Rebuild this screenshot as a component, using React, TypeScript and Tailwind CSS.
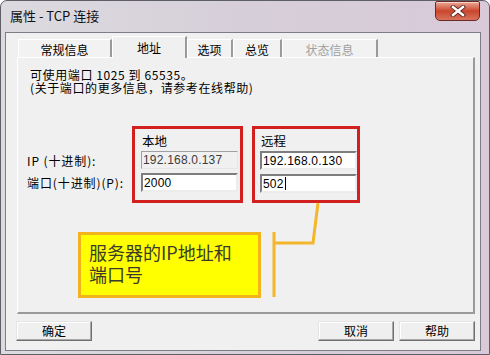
import React from 'react';

/**
 * Windows 7 style property dialog ("属性 - TCP 连接") with the address tab
 * open and a yellow annotation pointing at the remote IP / port fields.
 */

const cjk = "font-['Noto_Sans_CJK_SC',sans-serif]";
const latin = "font-['Liberation_Sans','Noto_Sans_CJK_SC',sans-serif]";

type Tab = { label: string; width: string; active?: boolean; disabled?: boolean };

const tabs: Tab[] = [
  { label: '常规信息', width: 'w-[94px]' },
  { label: '地址', width: 'w-[75px]', active: true },
  { label: '选项', width: 'w-[46px]' },
  { label: '总览', width: 'w-[49px]' },
  { label: '状态信息', width: 'w-[96px]', disabled: true },
];

function CloseButton() {
  return (
    <div className="self-start w-[45px] h-[20px] rounded-b-[5px] rounded-t-[2px] border border-[#6b2a22] bg-linear-to-b from-[#eba898] via-[#c9452c] to-[#d8725c] flex items-center justify-center shadow-[inset_0_1px_0_rgba(255,255,255,0.5)]">
      <svg width="16" height="12" viewBox="0 0 16 12">
        <path d="M3 2 L13 10 M13 2 L3 10" stroke="#5a2a24" strokeWidth="4.2" strokeLinecap="square" />
        <path d="M3 2 L13 10 M13 2 L3 10" stroke="#ffffff" strokeWidth="2.4" strokeLinecap="square" />
      </svg>
    </div>
  );
}

function TabStrip() {
  return (
    <div className="flex items-end h-[21px] pl-[1px]">
      {tabs.map((t) =>
        t.active ? (
          <div
            key={t.label}
            className={`${t.width} h-[22px] -mb-[1px] relative z-10 bg-[#f0f0f0] border-t border-l border-white border-r-2 border-r-[#9a9a9a] flex justify-center pt-[2px] text-[12px] leading-[17px] text-black ${cjk}`}
          >
            {t.label}
          </div>
        ) : (
          <div
            key={t.label}
            className={`${t.width} h-[18px] bg-[#f2f2f2] border-t border-l border-white border-r-2 border-r-[#9a9a9a] flex justify-center pt-[2px] text-[12px] leading-[16px] ${
              t.disabled ? 'text-[#a0a0a0]' : 'text-black'
            } ${cjk}`}
          >
            {t.label}
          </div>
        )
      )}
    </div>
  );
}

function Field({ value, readOnly, caret, width }: { value: string; readOnly?: boolean; caret?: boolean; width: string }) {
  return (
    <div
      className={`${width} flex items-center pl-[1px] text-[12px] leading-[14px] ${latin} ${
        readOnly
          ? 'h-[18px] bg-[#f0f0f0] border border-t-[#a0a0a0] border-l-[#a0a0a0] border-b-[#e6e6e6] border-r-[#e6e6e6] text-[#3c3c3c]'
          : 'h-[19px] bg-white border-2 border-t-[#7e7e7e] border-l-[#7e7e7e] border-b-[#ececec] border-r-[#ececec] text-black'
      }`}
    >
      <span className="tracking-[0.2px]">{value}</span>
      {caret && <span className="ml-[1px] w-[1px] h-[13px] bg-black" />}
    </div>
  );
}

function AddressBox({ title, ip, port, readOnlyIp, caret, width, fieldWidth, padLeft }: {
  title: string;
  ip: string;
  port: string;
  readOnlyIp?: boolean;
  caret?: boolean;
  width: string;
  fieldWidth: string;
  padLeft: string;
}) {
  return (
    <div className={`${width} h-[77px] border-[3px] border-[#d2201f] ${padLeft} pt-[2px] flex flex-col`}>
      <div className={`h-[20px] pl-[1px] text-[12.5px] leading-[20px] text-black ${cjk}`}>{title}</div>
      <Field value={ip} readOnly={readOnlyIp} width={fieldWidth} />
      <div className="h-[4px]" />
      <Field value={port} caret={caret} width={fieldWidth} />
    </div>
  );
}

function DialogButton({ label }: { label: string }) {
  return (
    <div
      className={`w-[76px] h-[20px] flex items-center justify-center bg-[#efefef] border border-t-[#e4e4e4] border-l-[#e4e4e4] border-b-[#707070] border-r-[#707070] shadow-[inset_-1px_-1px_0_#a8a8a8,inset_1px_1px_0_#ffffff] text-[12px] text-black ${cjk}`}
    >
      {label}
    </div>
  );
}

export default function App() {
  return (
    <div className="w-[490px] h-[355px] overflow-hidden flex flex-col border border-[#5e5e66] rounded-t-[7px] bg-linear-to-r from-[#dcdadf] via-[#d6cfd9] to-[#d9c9d9]">
      {/* Title bar */}
      <div className="h-[31px] flex justify-between pl-[9px] pr-[9px]">
        <div className={`pt-[6px] text-[13px] leading-[18px] text-[#111] ${cjk}`}>属性 - TCP 连接</div>
        <CloseButton />
      </div>

      {/* Client area */}
      <div className="ml-[4px] mr-[8px] h-[319px] border border-[#7d7d85] bg-[#f0f0f0] pl-[11px] pr-[5px] pt-[3px] flex flex-col">
        <TabStrip />

        {/* Tab panel */}
        <div className="relative h-[257px] border-t border-l border-white border-r-2 border-b-2 border-r-[#9a9a9a] border-b-[#9a9a9a] bg-[#f0f0f0] flex flex-col">
          <div className={`pl-[12px] pt-[10px] text-[12px] leading-[13px] tracking-[0.6px] text-black ${cjk}`}>
            <div>可使用端口 1025 到 65535。</div>
            <div>(关于端口的更多信息，请参考在线帮助)</div>
          </div>

          {/* Local / remote addresses */}
          <div className="mt-[32px] flex pl-[9px]">
            <div className={`w-[105px] pt-[26px] flex flex-col gap-[4px] text-[12px] leading-[18px] tracking-[0.9px] text-black ${cjk}`}>
              <div>IP (十进制):</div>
              <div>端口(十进制)(P):</div>
            </div>
            <AddressBox
              title="本地"
              ip="192.168.0.137"
              port="2000"
              readOnlyIp
              width="w-[111px]"
              fieldWidth="w-[97px]"
              padLeft="pl-[6px]"
            />
            <div className="w-[9px]" />
            <AddressBox
              title="远程"
              ip="192.168.0.130"
              port="502"
              caret
              width="w-[108px]"
              fieldWidth="w-[97px]"
              padLeft="pl-[5px]"
            />
          </div>

          {/* Annotation */}
          <div className="mt-[29px] ml-[60px] w-[183px] h-[66px] border-[3px] border-[#f2b31c] bg-[#ffff00] pl-[8px] pt-[6px]">
            <div className={`text-[18px] leading-[22px] text-[#3b3b2c] ${cjk}`}>
              <div className="h-[22px]">服务器的IP地址和</div>
              <div className="h-[22px]">端口号</div>
            </div>
          </div>

          <svg className="absolute left-0 top-0 w-full h-full pointer-events-none" viewBox="0 0 455 254" preserveAspectRatio="none">
            <path d="M300 145 L295 185 L256 185" fill="none" stroke="#f4b62a" strokeWidth="3" strokeLinejoin="miter" />
            <path d="M256 174 L256 239" fill="none" stroke="#f4b62a" strokeWidth="3" />
          </svg>
        </div>

        {/* Buttons */}
        <div className="mt-[7px] -ml-[1px] flex justify-between">
          <DialogButton label="确定" />
          <div className="flex gap-[5px]">
            <DialogButton label="取消" />
            <DialogButton label="帮助" />
          </div>
        </div>
      </div>
    </div>
  );
}
